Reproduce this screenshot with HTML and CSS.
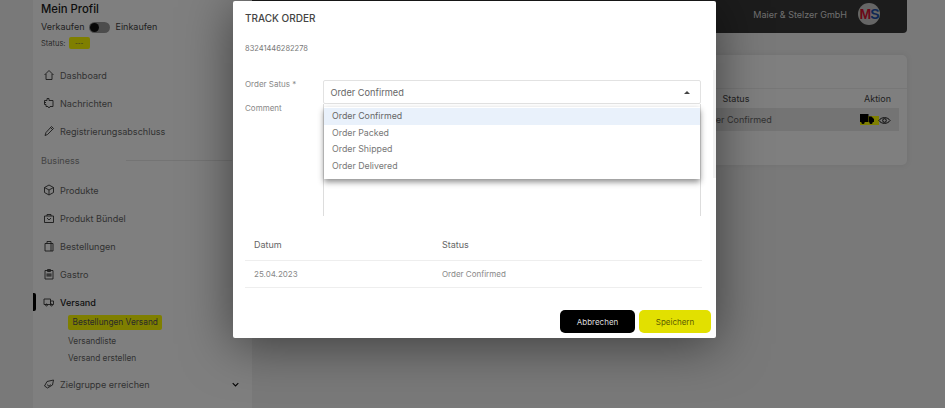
FILE: index.html
```html
<!DOCTYPE html>
<html lang="de">
<head>
<meta charset="utf-8">
<title>Track Order</title>
<link rel="stylesheet" href="styles.css">
</head>
<body>
<div class="page">
  <aside class="sidebar">
    <h2 class="profile-name">Mein Profil</h2>
    <div class="mode-row"><span>Verkaufen</span><span class="toggle"><span class="knob"></span></span><span>Einkaufen</span></div>
    <div class="status-row"><span>Status:</span><span class="status-badge">---</span></div>
    <nav class="nav">
      <a class="nav-item"><svg class="icon" viewBox="0 0 12 12"><path d="M1.500 6 6 1.500 10.500 6M3 5v5.500h6V5"/></svg>Dashboard</a>
      <a class="nav-item"><svg class="icon" viewBox="0 0 12 12"><path d="M4 1.500v2H1.500v4H3v2h2l1 1.500 1-1.500h3v-6H6v-2zM1 5.500h2"/></svg>Nachrichten</a>
      <a class="nav-item"><svg class="icon" viewBox="0 0 12 12"><path d="M2 10.500 3 7.500 8.500 1.500 10.500 3.500 4.500 9.500zM7.500 2.500l2 2"/></svg>Registrierungsabschluss</a>
      <div class="nav-section"><span>Business</span><span class="section-line"></span></div>
      <a class="nav-item"><svg class="icon" viewBox="0 0 12 12"><path d="M6 1 10.500 3.500v5L6 11 1.500 8.500v-5zM1.500 3.500 6 6l4.500-2.500M6 6v5"/></svg>Produkte</a>
      <a class="nav-item"><svg class="icon" viewBox="0 0 12 12"><path d="M1.500 4h9v6.500h-9zM4 4V2.500h4V4M4 6l2 2 2-2"/></svg>Produkt Bündel</a>
      <a class="nav-item"><svg class="icon" viewBox="0 0 12 12"><path d="M2 3.500h8v7.500H2zM4 3.500V1.500h4v2M8 3.500v7.500"/></svg>Bestellungen</a>
      <a class="nav-item"><svg class="icon" viewBox="0 0 12 12"><path d="M2 2.500h8V11H2zM4.500 1.500h3v2h-3zM3.500 6h5M3.500 8h5M3.500 7h5"/></svg>Gastro</a>
      <a class="nav-item active"><svg class="icon" viewBox="0 0 12 12"><path d="M1 3h6.500v5.500H1zM7.500 5h3v3.500h-3z"/><circle cx="3.500" cy="9" r="1"/><circle cx="8.500" cy="9" r="1"/></svg>Versand</a>
      <div class="subnav">
        <a class="sub-item current">Bestellungen Versand</a>
        <a class="sub-item">Versandliste</a>
        <a class="sub-item">Versand erstellen</a>
      </div>
      <a class="nav-item last"><svg class="icon" viewBox="0 0 12 12"><path d="M1.500 8 4 3.500 10.500 2 9.500 7 4.500 10zM4.500 6.500a1.500 1.500 0 0 0 3 0"/></svg>Zielgruppe erreichen<svg class="chevron" viewBox="0 0 10 6"><path d="M1 1l4 4 4-4"/></svg></a>
    </nav>
  </aside>
  <main class="main">
    <header class="topbar">
      <span class="company">Maier &amp; Stelzer GmbH</span>
      <span class="logo"><span class="logo-m">M</span><span class="logo-s">S</span></span>
    </header>
    <section class="card">
      <div class="table-head"><span></span><span>Status</span><span></span><span>Aktion</span></div>
      <div class="table-row"><span></span><span>Order Confirmed</span><span></span>
        <span class="actions">
          <svg class="truck" viewBox="0 0 19 11"><rect x="0" y="2" width="19" height="9" fill="#ffff00"/><path fill="#000" d="M0 0h8.500v8H0zM9 2.500h2.500L14 5v3H9z"/><circle cx="3" cy="8.500" r="1.600" fill="#000"/><circle cx="11" cy="8.500" r="1.600" fill="#000"/></svg>
          <svg class="eye" viewBox="0 0 14 10"><path d="M.8 5C3.500.8 10.500.8 13.200 5 10.500 9.200 3.500 9.200.8 5z"/><circle cx="7" cy="5" r="2"/></svg>
        </span>
      </div>
    </section>
  </main>
</div>

<div class="overlay">
  <div class="modal">
    <h3 class="modal-title">TRACK ORDER</h3>
    <p class="order-no">83241446282278</p>
    <div class="form">
      <div class="labels">
        <label>Order Satus *</label>
        <label>Comment</label>
      </div>
      <div class="fields">
        <div class="select"><span>Order Confirmed</span><span class="caret"></span></div>
        <div class="textarea"></div>
        <ul class="dropdown">
          <li class="selected">Order Confirmed</li>
          <li>Order Packed</li>
          <li>Order Shipped</li>
          <li>Order Delivered</li>
        </ul>
      </div>
    </div>
    <div class="history">
      <div class="history-row head"><span>Datum</span><span>Status</span></div>
      <div class="history-row"><span>25.04.2023</span><span>Order Confirmed</span></div>
    </div>
    <div class="buttons">
      <button class="btn cancel">Abbrechen</button>
      <button class="btn save">Speichern</button>
    </div>
    <span class="scroll-track"></span>
  </div>
</div>
</body>
</html>
```
FILE: styles.css
```css
* { box-sizing: border-box; }
html, body { margin: 0; padding: 0; }
body {
  width: 945px;
  height: 408px;
  overflow: hidden;
  position: relative;
  font-family: Inter, "Open Sans", sans-serif;
  color: #333;
  background: #f2f2f2;
}
.page { display: flex; height: 408px; }

.sidebar {
  width: 219px;
  margin-left: 33px;
  flex: none;
  background: #ffffff;
  padding: 2px 0 0 8px;
}
.profile-name { margin: 0; font-size: 11.300px; font-weight: 500; line-height: 14px; color: #1a1a1a; }
.mode-row { display: flex; align-items: center; gap: 5px; margin-top: 4px; font-size: 9px; line-height: 14px; color: #444; }
.toggle { width: 21px; height: 11px; border-radius: 6px; background: #999; display: flex; align-items: center; }
.knob { width: 9px; height: 9px; border-radius: 50%; background: #111; margin-left: 1px; }
.status-row { display: flex; align-items: center; gap: 3px; margin-top: 3px; font-size: 7.500px; color: #555; }
.status-badge { width: 21px; height: 12px; border-radius: 2px; background: #ffff00; color: #555; font-size: 6px; line-height: 12px; text-align: center; }

.nav { display: flex; flex-direction: column; margin-top: 12px; margin-right: 8px; }
.nav-item { display: flex; align-items: center; gap: 5px; height: 28px; margin-left: 2px; font-size: 9.100px; color: #666; position: relative; }
.icon { width: 12px; height: 12px; flex: none; fill: none; stroke: #333; stroke-width: .9; }
.nav-section { display: flex; align-items: center; gap: 6px; height: 31px; font-size: 9.100px; color: #888; }
.section-line { flex: 1; height: 1px; background: #e8e8e8; margin-left: 40px; margin-right: 12px; }
.nav-item.active { color: #222; font-weight: 500; }
.nav-item.active::before { content: ""; position: absolute; left: -10px; top: 5px; width: 3px; height: 18px; background: #000; border-radius: 0 2px 2px 0; }
.subnav { display: flex; flex-direction: column; align-items: flex-start; padding-left: 27px; margin-top: -1px; }
.sub-item { font-size: 8.300px; line-height: 16.500px; color: #666; }
.sub-item.current { background: #ffff00; color: #555; height: 15px; line-height: 15px; padding: 0 4.500px; border-radius: 2px; margin-bottom: 3px; }
.nav-item.last { margin-top: 4px; }
.chevron { width: 7px; height: 5px; fill: none; stroke: #000; stroke-width: 1.500; margin-left: auto; position: relative; left: -5px; }

.main { flex: 1; display: flex; flex-direction: column; padding-right: 38px; }
.topbar {
  height: 33px;
  background: #383838;
  border-radius: 0 0 4px 4px;
  display: flex;
  align-items: center;
  justify-content: flex-end;
  gap: 11px;
  padding: 0 27px 5px 0;
}
.company { font-size: 9px; color: #ddd; }
.logo {
  width: 22px; height: 22px; border-radius: 50%; background: #ccc;
  display: flex; align-items: center; justify-content: center;
  font: 700 14px/1 "Liberation Sans", sans-serif;
  letter-spacing: -1px;
}
.logo-m { color: #d8102e; }
.logo-s { color: #1d4fa8; }
.card {
  margin-top: 22px;
  height: 110px;
  background: #fff;
  border-radius: 5px;
  padding-top: 33px;
  box-shadow: 0 0 6px rgba(0,0,0,.08);
}
.table-head, .table-row {
  display: grid;
  grid-template-columns: 1fr 100px 70px 43px;
  margin-right: 8px;
  font-size: 9px;
  text-align: center;
  color: #444;
  align-items: center;
}
.table-head { height: 20px; border-top: 1px solid #eee; margin-right: 0; padding-right: 8px; }
.table-row { height: 23px; background: #e8e8e8; color: #666; }
.actions { display: flex; align-items: center; justify-content: flex-start; padding-left: 4px; }
.truck { width: 19px; height: 11px; flex: none; }
.eye { width: 13px; height: 9px; flex: none; margin-left: -1px; fill: none; stroke: #000; stroke-width: 1; position: relative; top: 1px; }

.overlay {
  position: absolute;
  inset: 0;
  background: rgba(0,0,0,.5);
  padding: 1px 0 0 233px;
}
.modal {
  position: relative;
  width: 483px;
  height: 337px;
  background: #fff;
  border-radius: 2px;
  padding: 0 15px 0 12px;
  box-shadow: 0 6px 50px rgba(0,0,0,.5);
  color: #777;
}
.modal-title { margin: 0; padding-top: 10px; font-size: 10px; line-height: 14px; font-weight: 500; color: #444; }
.order-no { margin: 18px 0 0; font-size: 7.500px; line-height: 12px; color: #777; }
.form { display: flex; margin-top: 25px; }
.labels { width: 78px; flex: none; display: flex; flex-direction: column; gap: 15px; font-size: 8px; line-height: 9px; color: #888; }
.labels label { display: block; }
.fields { flex: 1; position: relative; }
.select {
  height: 24px;
  border: 1px solid #e2e2e2;
  border-radius: 2px;
  display: flex;
  align-items: center;
  justify-content: space-between;
  padding: 0 10px 0 6.500px;
  font-size: 9.200px;
  color: #666;
}
.caret { width: 0; height: 0; border: 3px solid transparent; border-bottom: 3px solid #444; border-top: 0; }
.textarea { height: 112px; border-left: 1px solid #ddd; border-right: 1px solid #ddd; }
.dropdown {
  position: absolute;
  top: 27px;
  left: 1px;
  right: 1px;
  margin: 0;
  padding: 1px 0 5px;
  list-style: none;
  background: #fff;
  box-shadow: 0 3px 6px rgba(0,0,0,.45);
  font-size: 8.800px;
  color: #777;
}
.dropdown li { height: 16.600px; line-height: 16.600px; padding-left: 8px; }
.dropdown li.selected { background: #e9f1fb; color: #666; }
.history { margin-top: 12px; margin-right: -1px; }
.history-row {
  display: grid;
  grid-template-columns: 188px 1fr;
  padding-left: 9px;
  height: 27px;
  align-items: center;
  border-bottom: 1px solid #eee;
  font-size: 8px;
  color: #888;
}
.history-row.head { height: 33px; font-size: 9px; color: #666; }
.buttons { display: flex; justify-content: flex-end; gap: 4px; margin: 22px -10px 0 0; }
.btn { height: 23px; border: 0; border-radius: 5px; font: 8px Inter, sans-serif; padding: 0; }
.cancel { width: 75px; background: #000; color: #ddd; }
.save { width: 72px; background: #e2e000; color: #5c5c00; }
.scroll-track { position: absolute; top: 69px; right: 0; width: 3px; height: 108px; background: #f2f2f2; }
```
